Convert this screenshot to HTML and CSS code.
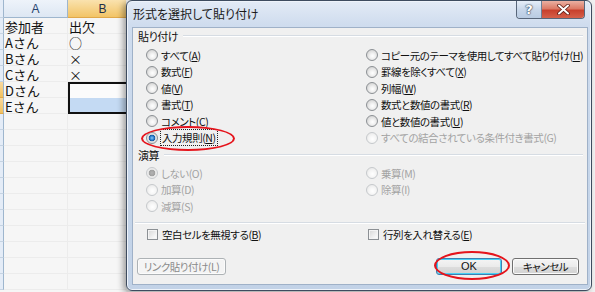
FILE: index.html
```html
<!DOCTYPE html>
<html lang="ja">
<head>
<meta charset="utf-8">
<title>形式を選択して貼り付け</title>
<link rel="stylesheet" href="styles.css">
</head>
<body>
<div class="screen">
  <div class="sheet">
    <div class="rh"></div><div class="ch">A</div><div class="ch ch-sel">B</div>
    <div class="rh"></div><div class="cell">参加者</div><div class="cell">出欠</div>
    <div class="rh"></div><div class="cell">Aさん</div><div class="cell">○</div>
    <div class="rh"></div><div class="cell">Bさん</div><div class="cell">×</div>
    <div class="rh"></div><div class="cell">Cさん</div><div class="cell">×</div>
    <div class="rh rh-sel"></div><div class="cell">Dさん</div><div class="cell sel-top"></div>
    <div class="rh rh-sel"></div><div class="cell">Eさん</div><div class="cell sel-bottom"></div>
    <div class="rh"></div><div class="cell"></div><div class="cell"></div>
    <div class="rh"></div><div class="cell"></div><div class="cell"></div>
    <div class="rh"></div><div class="cell"></div><div class="cell"></div>
    <div class="rh"></div><div class="cell"></div><div class="cell"></div>
    <div class="rh"></div><div class="cell"></div><div class="cell"></div>
    <div class="rh"></div><div class="cell"></div><div class="cell"></div>
    <div class="rh"></div><div class="cell"></div><div class="cell"></div>
    <div class="rh"></div><div class="cell"></div><div class="cell"></div>
    <div class="rh"></div><div class="cell"></div><div class="cell"></div>
    <div class="rh"></div><div class="cell"></div><div class="cell"></div>
    <div class="rh"></div><div class="cell"></div><div class="cell"></div>
  </div>

  <div class="dialog">
    <div class="titlebar">
      <span class="title">形式を選択して貼り付け</span>
      <div class="caption">
        <span class="cap-btn cap-help">?</span>
        <span class="cap-btn cap-close">
          <svg width="13" height="11" viewBox="0 0 13 11"><path d="M2 1.5 L11 9.5 M11 1.5 L2 9.5" stroke="#5a1a12" stroke-width="3.6" stroke-linecap="round"/><path d="M2 1.5 L11 9.5 M11 1.5 L2 9.5" stroke="#ffffff" stroke-width="2" stroke-linecap="round"/></svg>
        </span>
      </div>
    </div>

    <div class="panel">
      <div class="group-head"><span>貼り付け</span></div>
      <div class="options">
        <div class="opt"><span class="radio"></span><span>すべて(<u>A</u>)</span></div>
        <div class="opt"><span class="radio"></span><span>コピー元のテーマを使用してすべて貼り付け(<u>H</u>)</span></div>
        <div class="opt"><span class="radio"></span><span>数式(<u>F</u>)</span></div>
        <div class="opt"><span class="radio"></span><span>罫線を除くすべて(<u>X</u>)</span></div>
        <div class="opt"><span class="radio"></span><span>値(<u>V</u>)</span></div>
        <div class="opt"><span class="radio"></span><span>列幅(<u>W</u>)</span></div>
        <div class="opt"><span class="radio"></span><span>書式(<u>T</u>)</span></div>
        <div class="opt"><span class="radio"></span><span>数式と数値の書式(<u>R</u>)</span></div>
        <div class="opt"><span class="radio"></span><span>コメント(<u>C</u>)</span></div>
        <div class="opt"><span class="radio"></span><span>値と数値の書式(<u>U</u>)</span></div>
        <div class="opt marked"><span class="radio checked"></span><span class="focus">入力規則(<u>N</u>)</span><span class="ring ring-rule"></span></div>
        <div class="opt off"><span class="radio"></span><span>すべての結合されている条件付き書式(G)</span></div>
      </div>

      <div class="group-head head-calc"><span>演算</span></div>
      <div class="options options-calc">
        <div class="opt off"><span class="radio checked"></span><span>しない(O)</span></div>
        <div class="opt off"><span class="radio"></span><span>乗算(M)</span></div>
        <div class="opt off"><span class="radio"></span><span>加算(D)</span></div>
        <div class="opt off"><span class="radio"></span><span>除算(I)</span></div>
        <div class="opt off"><span class="radio"></span><span>減算(S)</span></div>
        <div class="opt"></div>
      </div>

      <div class="separator"></div>

      <div class="checks">
        <div class="chk"><span class="box"></span><span>空白セルを無視する(<u>B</u>)</span></div>
        <div class="chk chk-right"><span class="box"></span><span>行列を入れ替える(<u>E</u>)</span></div>
      </div>

      <div class="buttons">
        <span class="btn btn-off">リンク貼り付け(L)</span>
        <span class="btn btn-ok">OK<span class="ring ring-ok"></span></span>
        <span class="btn">キャンセル</span>
      </div>
    </div>
  </div>
</div>
</body>
</html>
```

FILE: styles.css
```css
html, body {
  margin: 0;
  padding: 0;
}

body {
  width: 595px;
  height: 292px;
  overflow: hidden;
  background: #f2f2f2;
  font-family: "Noto Sans CJK JP", "Noto Sans", sans-serif;
}

.screen {
  display: flex;
  width: 595px;
  height: 292px;
  overflow: hidden;
  background: #f1f1f1;
}

/* ---------- spreadsheet ---------- */
.sheet {
  flex: none;
  width: 126px;
  height: 292px;
  overflow: hidden;
  display: grid;
  grid-template-columns: 4px 64px 70px;
  grid-template-rows: 18px;
  grid-auto-rows: 16px;
  background: #f6f6f6;
  font-size: 13px;
  color: #111;
}

.rh {
  box-sizing: border-box;
  background: #e4ecf7;
  border-right: 1px solid #9eb6ce;
  border-bottom: 1px solid #c5d3e2;
}

.rh-sel {
  background: linear-gradient(#f9d99f, #f1c15f);
  border-bottom-color: #e0a84a;
}

.ch {
  box-sizing: border-box;
  display: flex;
  align-items: center;
  justify-content: center;
  background: linear-gradient(#eef3fa, #dde7f3);
  border-right: 1px solid #9eb6ce;
  border-bottom: 1px solid #9eb6ce;
  color: #27436e;
  font-family: "Liberation Sans", sans-serif;
  font-size: 12px;
}

.ch-sel {
  background: linear-gradient(#fae2ae, #f2c466);
  border-bottom-color: #e0a84a;
  color: #1f2f4a;
}

.cell {
  box-sizing: border-box;
  display: flex;
  align-items: center;
  padding-left: 1px;
  padding-top: 2px;
  line-height: 14px;
  border-bottom: 1px solid #ececec;
  border-right: 1px solid #ececec;
  white-space: nowrap;
}

.sel-top {
  background: #fbfbfb;
  border-top: 2px solid #111;
  border-left: 2px solid #111;
  border-bottom: none;
}

.sel-bottom {
  background: #c4daf3;
  border-left: 2px solid #111;
  border-bottom: 2px solid #111;
}

/* ---------- dialog ---------- */
.dialog {
  flex: none;
  position: relative;
  width: 466px;
  height: 291px;
  box-sizing: border-box;
  display: flex;
  flex-direction: column;
  padding: 0 3px 5px 5px;
  border: 1px solid #3e4c5f;
  border-radius: 6px;
  background: linear-gradient(#e3ebf6, #cfdcee 24px, #c6d6ea 60%, #c2d2e7);
  box-shadow: -3px 2px 6px rgba(0, 0, 0, 0.35), inset 0 0 0 1px #eef3fa;
  font-feature-settings: "palt" 1;
  font-size: 10.5px;
  letter-spacing: -0.45px;
  color: #111;
}

.titlebar {
  flex: none;
  height: 26px;
  display: flex;
  align-items: center;
}

.title {
  margin-left: 1px;
  padding-bottom: 2px;
  font-size: 12px;
  letter-spacing: 0;
  color: #1a1a1a;
}

.caption {
  align-self: flex-start;
  margin-left: auto;
  margin-right: 3px;
  display: flex;
  height: 17px;
  border: 1px solid #58667a;
  border-top: none;
  border-radius: 0 0 4px 4px;
  overflow: hidden;
}

.cap-btn {
  display: flex;
  align-items: center;
  justify-content: center;
  height: 17px;
}

.cap-help {
  width: 24px;
  background: linear-gradient(#e6eef8, #c8d7ea 50%, #b9cbe2);
  border-right: 1px solid #6f7f96;
  color: #fff;
  font-family: "DejaVu Sans", sans-serif;
  font-weight: bold;
  font-size: 13px;
  letter-spacing: 0;
  text-shadow: 0 0 1px #3b4a60, 0 0 1px #3b4a60, 0 0 2px #3b4a60;
}

.cap-close {
  width: 42px;
  background: linear-gradient(#eab0a2, #dc7a66 45%, #c8402d 55%, #d5604a);
}

.panel {
  flex: 1;
  position: relative;
  display: flex;
  flex-direction: column;
  background: #f0f0f0;
  border: 1px solid #9fb1c8;
}

.group-head {
  display: flex;
  align-items: center;
  height: 15px;
  padding: 0 4px 0 5px;
  font-size: 11px;
}

.group-head::after {
  content: "";
  flex: 1;
  margin-left: 5px;
  border-top: 1px solid #d6dce3;
  border-bottom: 1px solid #ffffff;
}

.head-calc {
  margin-top: 1px;
}

.options {
  display: grid;
  grid-template-columns: 220px 1fr;
  grid-auto-rows: 16.5px;
  margin-top: 4px;
  padding-left: 13px;
}

.options-calc {
  margin-top: 3px;
}

.opt {
  position: relative;
  display: flex;
  align-items: center;
  gap: 3px;
  white-space: nowrap;
}

.opt.off {
  color: #a3a3a3;
}

.radio {
  flex: none;
  width: 12px;
  height: 12px;
  box-sizing: border-box;
  border-radius: 50%;
  border: 1px solid #8c9094;
  background: radial-gradient(circle at 55% 60%, #ffffff 0, #f2f2f2 30%, #cfcfcf 85%);
}

.radio.checked {
  background: radial-gradient(circle at 50% 50%, #8fcaf5 0, #2c7fd0 2px, #17589f 3px, #dedede 3.6px, #f6f6f6 100%);
}

.off .radio {
  border-color: #c6c9cc;
  background: radial-gradient(circle at 55% 60%, #ffffff 0, #f6f6f6 40%, #e6e6e6 90%);
}

.off .radio.checked {
  background: radial-gradient(circle at 50% 50%, #b4b4b4 0, #a0a0a0 3px, #e8e8e8 3.6px, #f6f6f6 100%);
}

.focus {
  outline: 1px dotted #222;
  outline-offset: 0;
  padding: 0 1px;
}

.ring {
  position: absolute;
  box-sizing: border-box;
  border: 2px solid #e5141c;
  border-radius: 50%;
  pointer-events: none;
}

.ring-rule {
  left: -5px;
  top: -4px;
  width: 94px;
  height: 25px;
}

.separator {
  margin: 7px 2px 0 2px;
  border-top: 1px solid #d6dce3;
  border-bottom: 1px solid #ffffff;
}

.checks {
  display: grid;
  grid-template-columns: 220px 1fr;
  height: 16px;
  margin-top: 3px;
  padding-left: 13px;
}

.chk {
  display: flex;
  align-items: center;
  gap: 4px;
  padding-left: 1px;
  white-space: nowrap;
}

.chk-right {
  padding-left: 2px;
}

.box {
  flex: none;
  width: 11px;
  height: 11px;
  box-sizing: border-box;
  border: 1px solid #8c9094;
  background: linear-gradient(135deg, #d6d6d6, #f4f4f4 70%, #ffffff);
  box-shadow: inset 0 0 0 1px #f4f4f4;
}

.buttons {
  display: flex;
  align-items: center;
  margin-top: 15px;
  padding: 0 8px 0 4px;
}

.btn {
  position: relative;
  box-sizing: border-box;
  display: flex;
  align-items: center;
  justify-content: center;
  width: 67px;
  height: 17px;
  border: 1px solid #707070;
  border-radius: 3px;
  background: linear-gradient(#f4f4f4, #ebebeb 50%, #dddddd 51%, #d2d2d2);
  box-shadow: inset 0 0 0 1px #fbfbfb;
  font-size: 10.5px;
  white-space: nowrap;
}

.btn-off {
  width: 89px;
  margin-right: auto;
  border-color: #adb2b5;
  background: #f4f4f4;
  color: #8a8a8a;
}

.btn-ok {
  width: 66px;
  margin-right: 10px;
  border-color: #3c7fb1;
  box-shadow: inset 0 0 0 1px #48d0f5;
  font-family: "Liberation Sans", sans-serif;
  font-size: 11px;
  letter-spacing: 0;
}

.ring-ok {
  left: -3px;
  top: -8px;
  width: 76px;
  height: 29px;
}
```
